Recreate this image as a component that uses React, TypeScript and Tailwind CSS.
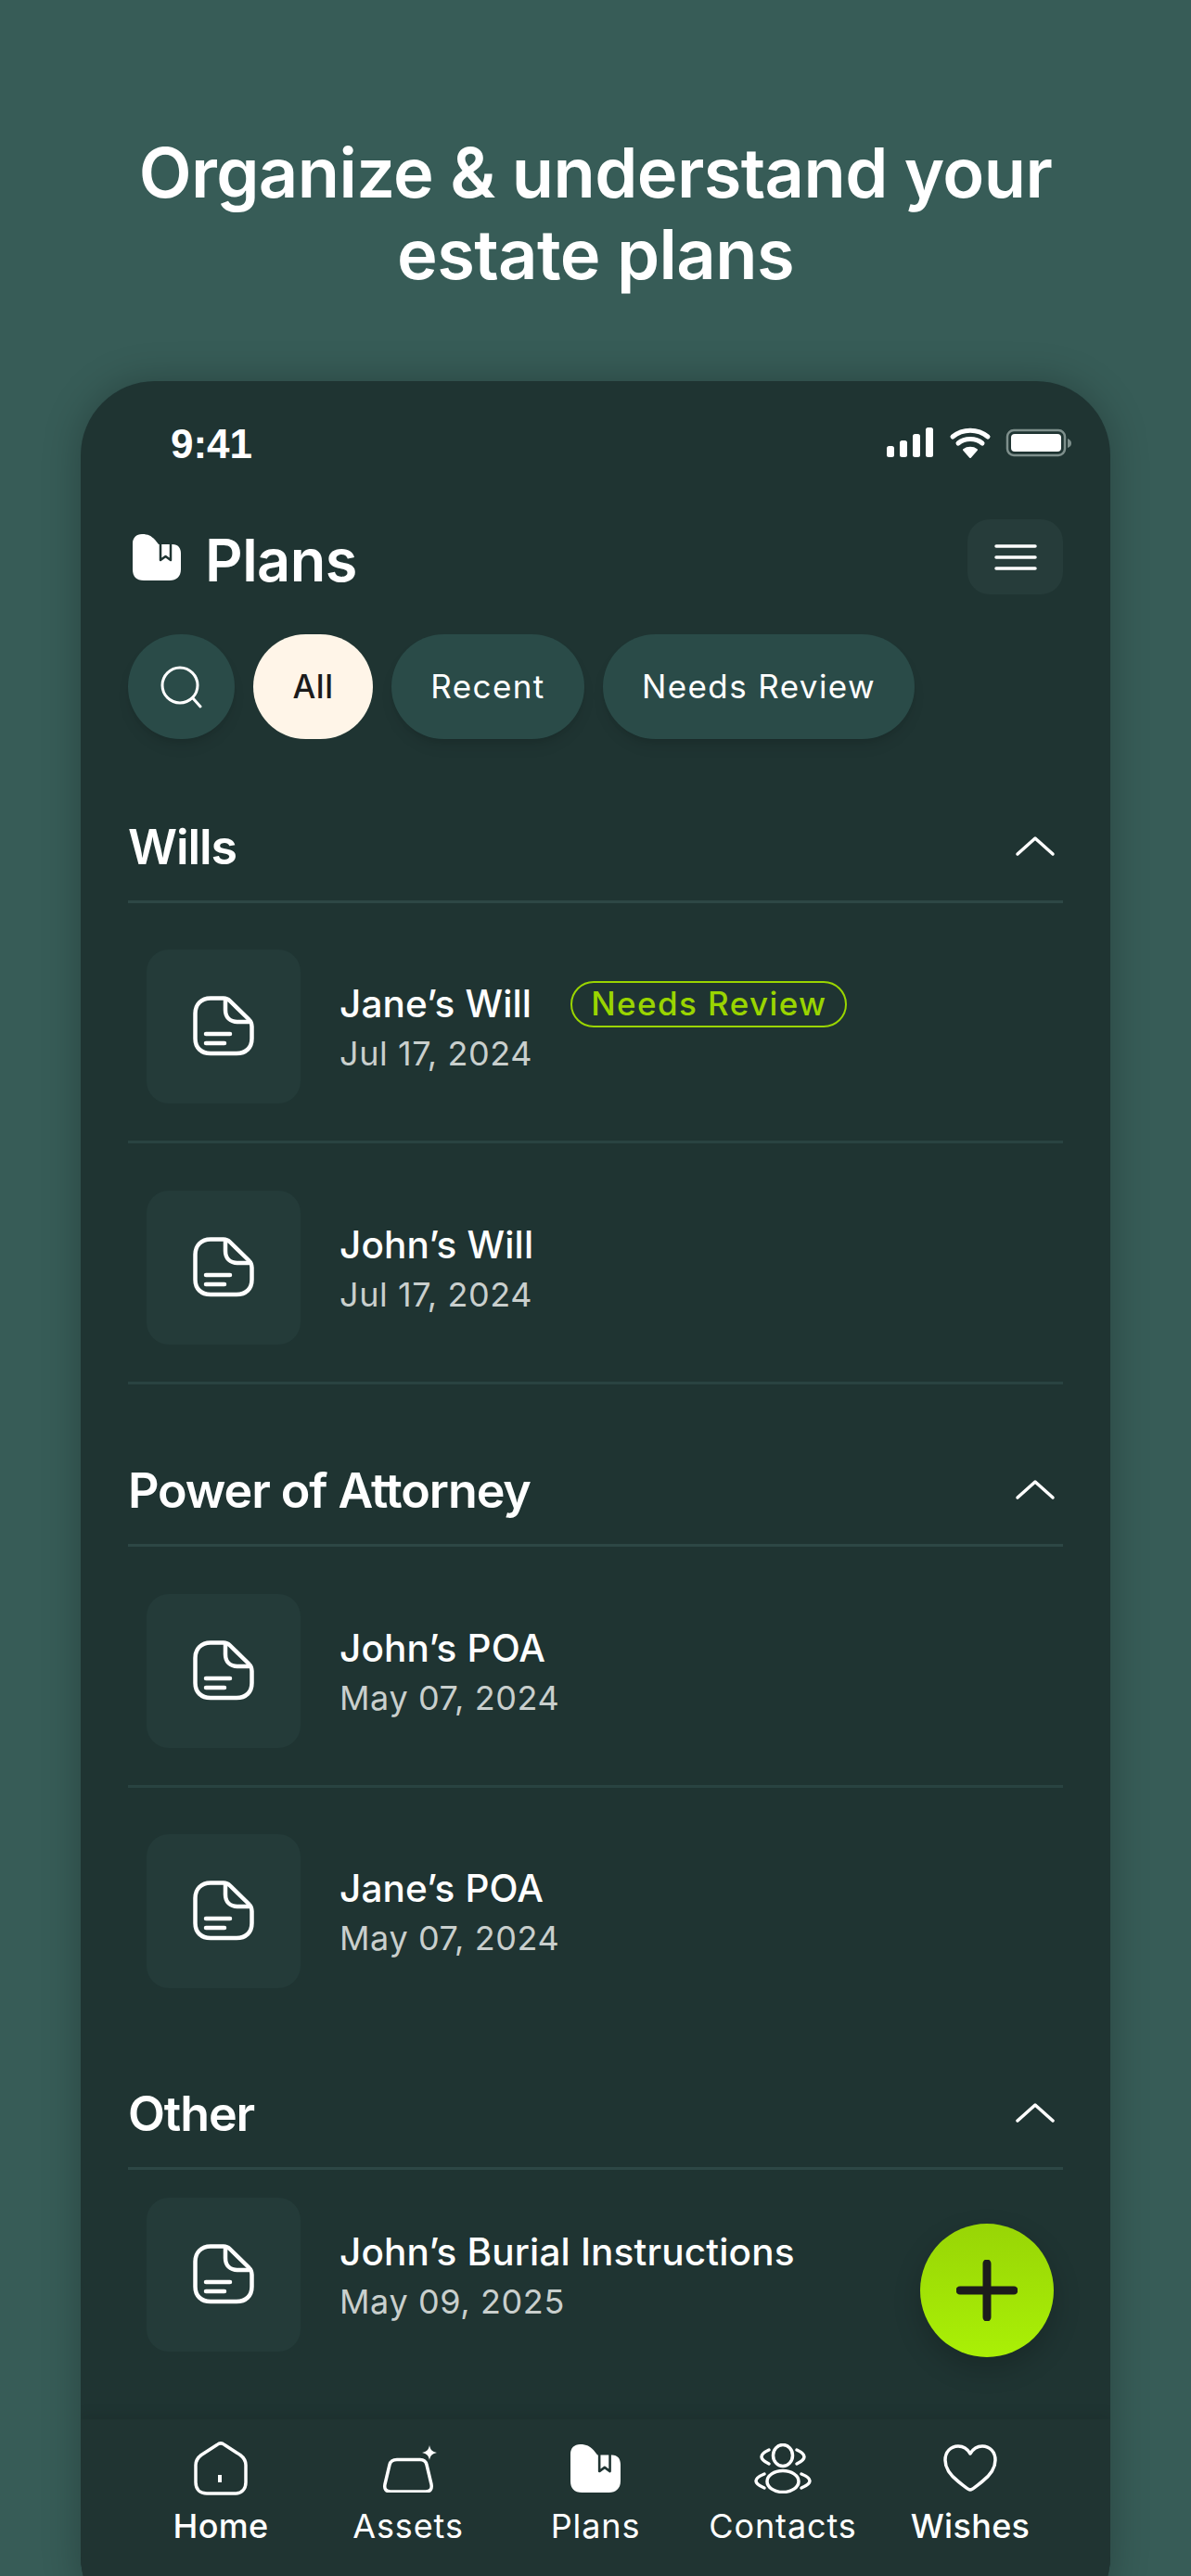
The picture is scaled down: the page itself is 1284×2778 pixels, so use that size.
import React from 'react';

const FONT = "font-['Inter',sans-serif]";

function DocIcon() {
  return (
    <svg width="66" height="66" viewBox="0 0 66 66" fill="none" stroke="#fff" strokeWidth="4.500" strokeLinecap="round" strokeLinejoin="round">
      <path d="M19 2.500h14c3 0 5 1 7 3l20 19.500c2.500 2.500 3.500 5 3.500 8v13c0 10-6.500 16-16.500 16H19C9 62 2.500 56 2.500 46V19C2.500 9 9 2.500 19 2.500Z" />
      <path d="M35 3.500V15c0 8 5 13 13 13h14" />
      <path d="M14 41h26M14 51h20" />
    </svg>
  );
}

function ChevronUp() {
  return (
    <svg width="44" height="24" viewBox="0 0 44 24" fill="none" stroke="#fff" strokeWidth="3.500" strokeLinecap="round" strokeLinejoin="round">
      <path d="M3 21 22 4l19 17" />
    </svg>
  );
}

function PlansIcon({ size }: { size: number }) {
  return (
    <svg width={size} height={(size * 50) / 52} viewBox="0 0 52 50" fill="none">
      <path
        fill="#fff"
        d="M10 0c7 0 10 2 14 6l4 5h15c6 0 9 4 9 10v17c0 8-5 12-12 12H12C4 50 0 46 0 38V10C0 4 4 0 10 0Z"
      />
      <path d="M30 10v18l5.500-4 5.500 4V10" stroke="#1f3432" strokeWidth="2.500" strokeLinejoin="round" />
    </svg>
  );
}

function HomeIcon() {
  return (
    <svg width="58" height="58" viewBox="0 0 58 58" fill="none" stroke="#fff" strokeWidth="3.500" strokeLinecap="round" strokeLinejoin="round">
      <path d="M25 3.500c2.500-2 5.500-2 8 0l17 11c4 3 6 6 6 11V44c0 8-5 12-12 12H14C7 56 2 52 2 44V25.500c0-5 2-8 6-11l17-11Z" />
      <path d="M28 36v8" strokeWidth="4" strokeLinecap="butt" />
    </svg>
  );
}

function AssetsIcon() {
  return (
    <svg width="58" height="51" viewBox="0 0 58 51" fill="none" className="ml-[4px]">
      <path
        d="M15 15.500h25c4 0 6 1.500 7 5.500l5 21c1 5-1 8-6 8H8c-5 0-7-3-6-8l5-21c1-4 4-5.500 8-5.500Z"
        stroke="#fff"
        strokeWidth="3.500"
        strokeLinejoin="round"
      />
      <path d="M50 0c1 5 3 7 8 8-5 1-7 3-8 8-1-5-3-7-8-8 5-1 7-3 8-8Z" fill="#fff" />
    </svg>
  );
}

function ContactsIcon() {
  return (
    <svg width="62" height="54" viewBox="0 0 62 54" fill="none" stroke="#fff" strokeWidth="3.500" strokeLinecap="round">
      <ellipse cx="31" cy="13" rx="10.500" ry="11.500" />
      <ellipse cx="31" cy="41" rx="17" ry="11.500" />
      <path d="M16 7Q0 14.500 16 22M46 7Q62 14.500 46 22M11 33Q-7 40.500 11 48M51 33Q69 40.500 51 48" />
    </svg>
  );
}

function HeartIcon() {
  return (
    <svg width="58" height="52" viewBox="0 0 58 52" fill="none" stroke="#fff" strokeWidth="3.500" strokeLinejoin="round">
      <path d="M29 49c-2 0-4-2-13-9C7 33 2 26 2 17 2 8 8 2 16 2c6 0 10 3 13 8 3-5 7-8 13-8 8 0 14 6 14 15 0 9-5 16-14 23-9 7-11 9-13 9Z" />
    </svg>
  );
}

function Row({ name, date, badge, last }: { name: string; date: string; badge?: boolean; last?: boolean }) {
  return (
    <div className={last ? 'flex items-center gap-[42px] pl-[20px]' : 'flex items-center gap-[42px] pl-[20px] pb-[40px] border-b-[3px] border-[#294341]'}>
      <div className="flex h-[166px] w-[166px] shrink-0 items-center justify-center rounded-[24px] bg-[#243b39]">
        <DocIcon />
      </div>
      <div className="flex flex-col pt-[4px]">
        <div className="flex items-center gap-[42px]">
          <span className="text-[40.5px] leading-[50px] font-medium tracking-[0.15px] text-white">{name}</span>
          {badge && (
            <span className="flex h-[50px] items-center rounded-full border-[2.500px] border-[#9ad500] px-[20px] text-[35px] font-medium tracking-[1.4px] text-[#9ad500]">
              Needs Review
            </span>
          )}
        </div>
        <span className="mt-[3px] text-[36px] leading-[50px] tracking-[0.6px] text-[#c9cfcd]">{date}</span>
      </div>
    </div>
  );
}

function SectionHead({ title }: { title: string }) {
  return (
    <div className="flex h-[90px] items-start justify-between border-b-[3px] border-[#2d4745] pr-[8px]">
      <h2 className="text-[52px] leading-[60px] font-semibold tracking-[-1.1px] text-white">{title}</h2>
      <span className="mt-[16px]"><ChevronUp /></span>
    </div>
  );
}

const navItems = [
  { label: 'Home', icon: <HomeIcon />, bold: true },
  { label: 'Assets', icon: <AssetsIcon /> },
  { label: 'Plans', icon: <PlansIcon size={54} /> },
  { label: 'Contacts', icon: <ContactsIcon /> },
  { label: 'Wishes', icon: <HeartIcon />, bold: true },
];

export default function App() {
  return (
    <div className={`flex h-[2778px] flex-col items-center overflow-hidden bg-[#375c57] ${FONT}`}>
      <h1 className="mt-[142px] text-center text-[74px] leading-[88px] font-semibold tracking-[-0.6px] text-white">
        Organize &amp; understand your
        <br />
        estate plans
      </h1>

      <div className="relative mt-[93px] flex h-[2426px] w-[1110px] shrink-0 flex-col overflow-hidden rounded-[80px] bg-[#1f3432] shadow-[0_0_40px_rgba(0,0,0,0.25)]">
        {/* status bar */}
        <div className="mt-[47px] flex h-[40px] shrink-0 items-center justify-between pr-[42px] pl-[97px]">
          <span className="pt-[2px] font-['Liberation_Sans',sans-serif] text-[44px] font-bold text-white">9:41</span>
          <svg width="200" height="36" viewBox="0 0 200 36" fill="none">
            <rect x="1" y="21" width="8" height="12" rx="2.500" fill="#fff" />
            <rect x="15" y="15" width="8" height="18" rx="2.500" fill="#fff" />
            <rect x="29" y="8" width="8" height="25" rx="2.500" fill="#fff" />
            <rect x="43" y="1" width="8" height="32" rx="2.500" fill="#fff" />
            <path d="M72 11c11-9 27-9 38 0M78 18c7-6 19-6 26 0" stroke="#fff" strokeWidth="5" strokeLinecap="round" />
            <path d="M84 25c4-3 10-3 14 0l-7 8-7-8Z" fill="#fff" stroke="#fff" strokeWidth="2" strokeLinejoin="round" />
            <rect x="131" y="4" width="62" height="27" rx="7" stroke="#7e8f8c" strokeWidth="2.500" />
            <rect x="135" y="8" width="54" height="19" rx="4" fill="#fff" />
            <path d="M196 13c3 1 4 3 4 5s-1 4-4 5Z" fill="#7e8f8c" />
          </svg>
        </div>

        {/* header */}
        <div className="mt-[62px] flex h-[81px] shrink-0 items-center justify-between pr-[51px] pl-[56px]">
          <div className="flex items-center gap-[26px]">
            <PlansIcon size={52} />
            <span className="pt-[7px] text-[63px] leading-[74px] font-semibold tracking-[-0.5px] text-white">Plans</span>
          </div>
          <button className="flex h-[81px] w-[103px] items-center justify-center rounded-[24px] bg-[#263c3a]">
            <svg width="46" height="30" viewBox="0 0 46 30" stroke="#fff" strokeWidth="3.500" strokeLinecap="round">
              <path d="M2 3h42M2 15h42M2 27h42" />
            </svg>
          </button>
        </div>

        {/* filters */}
        <div className="mt-[43px] flex h-[113px] shrink-0 gap-[20px] pl-[51px] text-[35px] tracking-[1.4px]">
          <button className="flex w-[115px] items-center justify-center rounded-full bg-[#2a4b48] shadow-lg">
            <svg width="46" height="46" viewBox="0 0 46 46" fill="none" stroke="#fff" strokeWidth="3" strokeLinecap="round">
              <circle cx="21" cy="21" r="19" />
              <path d="M35 35l8 9" />
            </svg>
          </button>
          <button className="w-[129px] rounded-full bg-[#fff5e8] font-medium tracking-[0.5px] text-[#1b1b1b]">All</button>
          <button className="w-[208px] rounded-full bg-[#2a4b48] text-white shadow-lg">Recent</button>
          <button className="w-[336px] rounded-full bg-[#2a4b48] text-white shadow-lg">Needs Review</button>
        </div>

        {/* plan groups */}
        <div className="min-h-0 flex-1 px-[51px]">
          <div className="mt-[87px]">
            <SectionHead title="Wills" />
            <div className="mt-[50px] flex flex-col gap-[51px]">
              <Row name="Jane’s Will" date="Jul 17, 2024" badge />
              <Row name="John’s Will" date="Jul 17, 2024" />
            </div>
          </div>
          <div className="mt-[85px]">
            <SectionHead title="Power of Attorney" />
            <div className="mt-[51px] flex flex-col gap-[50px]">
              <Row name="John’s POA" date="May 07, 2024" />
              <Row name="Jane’s POA" date="May 07, 2024" last />
            </div>
          </div>
          <div className="mt-[106px]">
            <SectionHead title="Other" />
            <div className="mt-[30px]">
              <Row name="John’s Burial Instructions" date="May 09, 2025" last />
            </div>
          </div>
        </div>

        {/* bottom nav */}
        <nav className="z-10 flex h-[228px] shrink-0 justify-center bg-[#203432] pt-[25px] shadow-[0_-6px_12px_rgba(0,0,0,0.08)]">
          {navItems.map((item) => (
            <div key={item.label} className="flex w-[202px] flex-col items-center">
              <div className="flex h-[56px] items-center justify-center">{item.icon}</div>
              <span className={item.bold ? 'mt-[10px] text-[36px] leading-[48px] font-medium tracking-[0.3px] text-white' : 'mt-[10px] text-[36px] leading-[48px] tracking-[0.9px] text-white'}>
                {item.label}
              </span>
            </div>
          ))}
        </nav>

        {/* add button */}
        <button className="absolute top-[1987px] right-[61px] z-20 flex h-[144px] w-[144px] items-center justify-center rounded-full bg-gradient-to-b from-[#98d506] to-[#aaf006] shadow-[0_12px_30px_rgba(0,0,0,0.2)]">
          <svg width="66" height="66" viewBox="0 0 66 66" stroke="#1c1c1c" strokeWidth="9" strokeLinecap="round">
            <path d="M33 4v58M4 33h58" />
          </svg>
        </button>
      </div>
    </div>
  );
}
